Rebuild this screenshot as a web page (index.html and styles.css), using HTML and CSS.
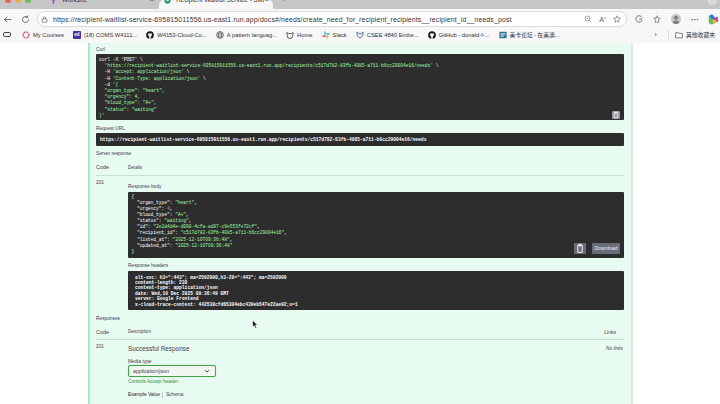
FILE: index.html
```html
<!DOCTYPE html>
<html>
<head>
    <title>Recipient Waitlist Service - Swagger UI</title>
    <meta charset="UTF-8">
    <link rel="stylesheet" href="styles.css">
</head>
<body>
<div class="tabstrip">
    <div class="lights"><i class="red"></i><i class="yellow"></i><i class="green"></i></div>
    <div class="tab">
        <svg class="fav" viewBox="0 0 10 10"><path d="M5 0.5 L9 3 L6 5.5 L6 9.5 L4 9.5 L4 5.5 L1 3 Z" fill="#9b3fc4"/></svg>
        <span class="tab-title">Workshe</span><span class="tab-x">×</span>
    </div>
    <div class="tab current">
        <svg class="fav" viewBox="0 0 10 10"><circle cx="5" cy="5" r="4.5" fill="#2f9e6e"/><path d="M3 5 L7 5" stroke="#fff"/></svg>
        <span class="tab-title">Recipient Waitlist Service - Swa</span><span class="tab-x">×</span>
    </div>
    <span class="tab-plus">+</span>
    <span class="tab-menu"></span>
</div>

<div class="addressrow">
    <svg class="nav-icon" viewBox="0 0 12 12"><path d="M11 6 H2 M5.5 2.5 L2 6 L5.5 9.5" fill="none" stroke="#444" stroke-width="1"/></svg>
    <svg class="nav-icon" viewBox="0 0 12 12"><path d="M10 6 A4 4 0 1 1 8.5 2.9 M8.8 0.8 V3.2 H6.4" fill="none" stroke="#444" stroke-width="1"/></svg>
    <div class="urlbar">
        <svg class="lock" viewBox="0 0 10 10"><rect x="1.5" y="4" width="7" height="5" rx="1" fill="none" stroke="#666"/><path d="M3.3 4 V2.8 A1.7 1.7 0 0 1 6.7 2.8 V4" fill="none" stroke="#666"/></svg>
        <span class="url">https://recipient-waitlist-service-695815011556.us-east1.run.app/docs#/needs/create_need_for_recipient_recipients__recipient_id__needs_post</span>
        <svg class="bar-icon" viewBox="0 0 10 10"><circle cx="4.3" cy="4.3" r="3" fill="none" stroke="#888"/><path d="M6.5 6.5 L9 9 M3 4.3 H5.6" stroke="#888"/></svg>
        <span class="bar-text">A<sup>ʌ</sup></span>
        <svg class="bar-icon" viewBox="0 0 10 10"><path d="M5 1 L6.2 3.8 L9.2 4.1 L6.9 6 L7.6 9 L5 7.4 L2.4 9 L3.1 6 L0.8 4.1 L3.8 3.8 Z" fill="none" stroke="#666" stroke-width="0.8"/></svg>
    </div>
    <div class="tools">
        <svg class="bar-icon" viewBox="0 0 10 10"><path d="M8.5 3 A4 4 0 1 0 8.8 6.2 M5 5 H9" fill="none" stroke="#555"/></svg>
        <svg class="bar-icon" viewBox="0 0 10 10"><path d="M5 1 L6 3.6 L9 4 L6.8 5.8 L7.4 9 H2.6 L3.2 5.8 L1 4 L4 3.6 Z" fill="none" stroke="#555" stroke-width="0.8"/></svg>
        <svg class="avatar" viewBox="0 0 10 10"><circle cx="5" cy="5" r="5" fill="#c4c4c4"/><circle cx="5" cy="3.8" r="2" fill="#7d7d7d"/><path d="M1.6 8.6 A3.6 3.2 0 0 1 8.4 8.6 A5 5 0 0 1 1.6 8.6 Z" fill="#7d7d7d"/></svg>
        <span class="dots">···</span>
        <svg class="copilot" viewBox="0 0 12 12"><path d="M2 3 A3 3 0 0 1 7 1.5 L10 6 L6 6 Z" fill="#2c7be5"/><path d="M10 3 A3 3 0 0 1 10 9 L7 10.5 L6 6 Z" fill="#e0447c"/><path d="M6 6 L7 10.5 A3 3 0 0 1 2 9 L2 3 Z" fill="#5fbf4c"/><circle cx="8.2" cy="8.2" r="2" fill="#f4b63c"/></svg>
    </div>
</div>

<div class="bookmarks">
    <span class="bm-first"></span>
    <span class="bm"><svg class="ico" viewBox="0 0 10 10"><circle cx="5" cy="5" r="3.6" fill="none" stroke="#c1536b" stroke-width="1.8" stroke-dasharray="1.6 0.7"/></svg>My Courses</span>
    <span class="bm"><i class="ed">ed</i>(18) COMS W4111...</span>
    <span class="bm"><svg class="ico" viewBox="0 0 10 10"><circle cx="5" cy="5" r="4.8" fill="#1b1b1b"/><path d="M3 2.6 L4 3.2 H6 L7 2.6 L7.3 5 A2.2 1.6 0 0 1 6 6.8 V9.6 H4 V6.8 A2.2 1.6 0 0 1 2.7 5 Z" fill="#f7f7f7"/></svg>W4153-Cloud-Co...</span>
    <span class="bm"><svg class="ico" viewBox="0 0 10 10"><g fill="none" stroke="#444" stroke-width="0.7"><circle cx="5" cy="5" r="4.3"/><ellipse cx="5" cy="5" rx="2" ry="4.3"/><path d="M0.7 5 H9.3 M1.4 2.8 H8.6 M1.4 7.2 H8.6"/></g></svg>A pattern languag...</span>
    <span class="bm"><svg class="ico" viewBox="0 0 10 10"><path d="M1 2 L3 3.2 H7 L9 2 L8.4 6 A3.4 3.4 0 0 1 1.6 6 Z" fill="none" stroke="#333" stroke-width="1"/></svg>Home</span>
    <span class="bm"><svg class="ico" viewBox="0 0 10 10" stroke-width="1.8" stroke-linecap="round"><path d="M3.6 1.2 V4.2" stroke="#36c5f0"/><path d="M5.8 3.6 H8.8" stroke="#2eb67d"/><path d="M6.4 5.8 V8.8" stroke="#ecb22e"/><path d="M1.2 6.4 H4.2" stroke="#e01e5a"/></svg>Slack</span>
    <span class="bm"><svg class="ico" viewBox="0 0 10 10"><path d="M1 1.5 L3 3 H7 L9 1.5 L8.4 6 L5 9 L1.6 6 Z" fill="none" stroke="#3d5fa8" stroke-width="1.1"/></svg>CSEE 4840 Embe...</span>
    <span class="bm"><svg class="ico" viewBox="0 0 10 10"><circle cx="5" cy="5" r="4.8" fill="#1b1b1b"/><path d="M3 2.6 L4 3.2 H6 L7 2.6 L7.3 5 A2.2 1.6 0 0 1 6 6.8 V9.6 H4 V6.8 A2.2 1.6 0 0 1 2.7 5 Z" fill="#f7f7f7"/></svg>GitHub - donald-f-...</span>
    <span class="bm"><svg class="ico" viewBox="0 0 10 10"><rect x="0.5" y="1" width="9" height="8" fill="#2a6f8f"/><rect x="2" y="3" width="6" height="1.5" fill="#e8f2f6"/><rect x="2" y="5.5" width="4" height="1.5" fill="#e8f2f6"/></svg><span class="cjk">美卡论坛 - 在美澳...</span></span>
    <span class="bm-more">›</span>
    <span class="bm other"><svg class="ico" viewBox="0 0 10 10"><path d="M0.8 2 H4 L5 3 H9.2 V8.6 H0.8 Z" fill="none" stroke="#444" stroke-width="0.8"/></svg><span class="cjk">其他收藏夹</span></span>
</div>

<div class="page">
    <div class="panel">
        <div class="label">Curl</div>
        <div class="code curl">
<pre>curl -X 'POST' \
  <em>'https://recipient-waitlist-service-695815011556.us-east1.run.app/recipients/c517d782-83fb-4085-a711-b6cc29004e16/needs'</em> \
  -H <em>'accept: application/json'</em> \
  -H <em>'Content-Type: application/json'</em> \
  -d <em>'{
  "organ_type": "heart",
  "urgency": 4,
  "blood_type": "A+",
  "status": "waiting"
}'</em></pre>
            <span class="copy"><svg viewBox="0 0 10 10"><path d="M3 2 H7 V8.5 H3 Z M4 1.2 H6 V2.6 H4 Z" fill="none" stroke="#f2f2f2" stroke-width="0.9"/></svg></span>
        </div>

        <div class="label">Request URL</div>
        <div class="code url-block"><pre>https://recipient-waitlist-service-695815011556.us-east1.run.app/recipients/c517d782-83fb-4085-a711-b6cc29004e16/needs</pre></div>

        <div class="label server">Server response</div>
        <div class="table-head"><span class="col-code">Code</span><span class="col-small">Details</span></div>
        <div class="table-row">
            <span class="col-code status">201</span>
            <div class="details">
                <div class="label sub">Response body</div>
                <div class="code body-block">
<pre>{
  "organ_type": <em>"heart"</em>,
  "urgency": <b>4</b>,
  "blood_type": <em>"A+"</em>,
  "status": <em>"waiting"</em>,
  "id": <em>"2e2d4d4e-d990-4cfa-ad97-c9e553fe72cf"</em>,
  "recipient_id": <em>"c517d782-83fb-4085-a711-b6cc29004e16"</em>,
  "listed_at": <em>"2025-12-10T09:36:48"</em>,
  "updated_at": <em>"2025-12-10T09:36:48"</em>
}</pre>
                    <div class="block-actions">
                        <span class="copy"><svg viewBox="0 0 10 10"><path d="M3 2 H7 V8.5 H3 Z M4 1.2 H6 V2.6 H4 Z" fill="none" stroke="#f2f2f2" stroke-width="0.9"/></svg></span>
                        <span class="download">Download</span>
                    </div>
                </div>
                <div class="label sub headers-label">Response headers</div>
                <div class="code headers-block">
<pre>alt-svc: h3=":443"; ma=2592000,h3-29=":443"; ma=2592000
content-length: 230
content-type: application/json
date: Wed,10 Dec 2025 09:36:49 GMT
server: Google Frontend
x-cloud-trace-context: 442538cfd65304ebc439eb547e22ae92;o=1</pre>
                </div>
            </div>
        </div>

        <div class="label responses">Responses</div>
        <div class="table-head wide"><span class="col-code">Code</span><span class="col-small">Description</span><span class="col-links">Links</span></div>
        <div class="table-row resp">
            <span class="col-code status">201</span>
            <div class="details">
                <div class="resp-title"><span>Successful Response</span><span class="no-links">No links</span></div>
                <div class="label sub media">Media type</div>
                <div class="select"><span>application/json</span><svg viewBox="0 0 8 8"><path d="M1.5 3 L4 5.5 L6.5 3" fill="none" stroke="#222" stroke-width="1.2"/></svg></div>
                <div class="controls">Controls Accept header.</div>
                <div class="example"><b>Example Value</b><span>Schema</span></div>
            </div>
        </div>
    </div>
    <div class="scroll-edge"></div>
    <svg class="cursor" viewBox="0 0 8 12"><path d="M1 0.5 V9 L3 7.3 L4.4 10.5 L5.8 9.9 L4.4 6.8 L7 6.6 Z" fill="#111" stroke="#fff" stroke-width="0.5"/></svg>
</div>
</body>
</html>
```

FILE: styles.css
```css
* {
    box-sizing: border-box;
}
html, body {
    margin: 0;
    height: 404px;
    overflow: hidden;
}
body {
    font-family: "Liberation Sans", "Noto Sans CJK SC", sans-serif;
    background-color: #fff;
    color: #3b4151;
}
pre {
    margin: 0;
    font-family: "Liberation Mono", monospace;
}

.tabstrip {
    height: 9px;
    background-color: #c6c6c6;
    display: flex;
    overflow: hidden;
    position: relative;
}
.lights {
    width: 43px;
    display: flex;
    gap: 4px;
    padding-left: 4.5px;
    flex-shrink: 0;
}
.lights i {
    width: 6px;
    height: 6px;
    border-radius: 50%;
    margin-top: -3px;
}
.lights .red { background-color: #ec5f57; }
.lights .yellow { background-color: #e9b13f; }
.lights .green { background-color: #5fc454; }
.tab {
    width: 112px;
    height: 9px;
    display: flex;
    align-items: flex-start;
    font-size: 6.4px;
    line-height: 8px;
    padding-left: 7px;
    color: #333;
    flex-shrink: 0;
}
.tab .fav {
    width: 7px;
    height: 7px;
    margin-right: 5px;
    margin-top: -3px;
    flex-shrink: 0;
}
.tab-title {
    margin-top: -4px;
    flex: 1;
    white-space: nowrap;
    overflow: hidden;
}
.tab-x {
    font-size: 8px;
    margin-top: -4px;
    margin-right: 1px;
    color: #555;
}
.tab.current {
    width: 114px;
    margin-left: 4px;
    background-color: #f7f7f7;
    border-radius: 5px 5px 0 0;
    padding-left: 5px;
}
.tab.current .tab-x {
    margin-right: 4px;
}
.tab-plus {
    margin-left: 9px;
    font-size: 8px;
    line-height: 8px;
    margin-top: -4px;
    color: #555;
}
.tab-menu {
    position: absolute;
    right: 3px;
    top: 0;
    width: 9px;
    height: 5px;
    background-color: #dadada;
    border-radius: 0 0 4px 4px;
}

.addressrow {
    height: 20px;
    background-color: #f7f7f7;
    display: flex;
    align-items: center;
    padding-left: 3px;
}
.nav-icon {
    width: 9px;
    height: 9px;
    margin-right: 9px;
    flex-shrink: 0;
}
.urlbar {
    flex: 0 0 590px;
    margin-left: -2px;
    height: 16px;
    border: 1px solid #dcdcdc;
    border-radius: 8px;
    background-color: #fff;
    display: flex;
    align-items: center;
    padding: 0 5px 0 3px;
    gap: 7px;
}
.lock {
    width: 7px;
    height: 7px;
    flex-shrink: 0;
}
.url {
    font-size: 6.9px;
    line-height: 11px;
    color: #333;
    white-space: nowrap;
    overflow: hidden;
    flex: 1;
    min-width: 0;
    margin-left: -2px;
    letter-spacing: 0.15px;
}
.bar-icon {
    width: 8px;
    height: 8px;
    flex-shrink: 0;
}
.bar-text {
    font-size: 7px;
    color: #666;
    line-height: 8px;
}
.bar-text sup {
    font-size: 4px;
}
.tools {
    display: flex;
    align-items: center;
    margin-left: 8px;
    gap: 10px;
}
.avatar {
    width: 10px;
    height: 10px;
}
.dots {
    font-size: 8px;
    font-weight: bold;
    color: #444;
}
.copilot {
    width: 11px;
    height: 11px;
    margin-left: -2px;
}

.bookmarks {
    height: 14px;
    padding: 0 0 3px 3px;
    background-color: #f7f7f7;
    display: flex;
    align-items: center;
    font-size: 5.8px;
    color: #333;
    white-space: nowrap;
}
.bm-first {
    width: 8px;
    height: 5px;
    border: 1px solid #444;
    border-radius: 2px;
    margin-right: 11px;
}
.bm {
    display: flex;
    align-items: center;
    gap: 3px;
    margin-right: 9px;
}
.cjk {
    font-family: "Noto Sans CJK SC", sans-serif;
}
.ico {
    width: 8px;
    height: 8px;
    flex-shrink: 0;
}
.ed {
    display: block;
    width: 8px;
    height: 8px;
    background-color: #4b2f91;
    color: #fff;
    border-radius: 1px;
    font-size: 4.5px;
    font-style: normal;
    font-weight: bold;
    line-height: 8px;
    text-align: center;
    flex-shrink: 0;
}
.bm-more {
    margin-left: auto;
    margin-right: 11px;
    font-size: 8px;
    line-height: 8px;
    color: #666;
}
.bm.other {
    margin-right: 5px;
    padding-left: 6px;
    border-left: 1px solid #ddd;
}

.page {
    position: relative;
    display: flex;
    height: 361px;
    padding-left: 88px;
    background-color: #fff;
}
.panel {
    width: 543px;
    height: 361px;
    overflow: hidden;
    background-color: #e8fbf0;
    border-left: 2px solid #a5ecc9;
    padding: 3px 7px 0 6px;
    font-size: 4.8px;
}
.scroll-edge {
    width: 2px;
    height: 361px;
    background-color: #e6e8e6;
}
.label {
    color: #3b4151;
    font-size: 4.8px;
    line-height: 6px;
    padding-top: 1px;
    margin-bottom: 1px;
}
.label.sub {
    margin-top: 7px;
    margin-bottom: 2px;
}
.code {
    background-color: #2d2d2d;
    border-radius: 1px;
    color: #fff;
    font-size: 4.57px;
    line-height: 6.2px;
    position: relative;
    overflow: hidden;
}
.code pre {
    font-weight: bold;
}
.code em {
    font-style: normal;
    color: #a2fca2;
}
.code b {
    color: #d36363;
}
.curl {
    height: 66px;
    padding: 3px;
    margin-bottom: 5px;
}
.curl pre {
    font-weight: normal;
}
.url-block {
    height: 13px;
    padding: 4px;
    font-size: 4.61px;
    line-height: 5px;
}
.label.server {
    margin-top: 4px;
    margin-bottom: -1px;
}
.table-head {
    display: flex;
    height: 20px;
    align-items: center;
    border-bottom: 1px solid #c9dfd2;
    padding-top: 3px;
}
.col-code {
    width: 32px;
    flex-shrink: 0;
    font-size: 5.4px;
}
.col-small {
    font-size: 4.6px;
}
.col-links {
    margin-left: auto;
    margin-right: 8px;
    font-size: 5px;
}
.table-row {
    display: flex;
}
.status {
    padding-top: 4px;
    font-size: 4.8px;
    line-height: 6px;
}
.details {
    flex: 1;
    min-width: 0;
}
.body-block {
    height: 66px;
    padding: 1.6px 3.5px;
    font-size: 4.55px;
    line-height: 6.14px;
}
.body-block pre {
    font-weight: normal;
}
.label.headers-label {
    margin-top: 4px;
}
.block-actions {
    position: absolute;
    right: 4px;
    bottom: 4px;
    display: flex;
    align-items: center;
    gap: 6px;
}
.copy {
    display: block;
    width: 8px;
    height: 8px;
    background-color: #9a9ca5;
    border-radius: 1px;
}
.copy svg {
    display: block;
    width: 100%;
    height: 100%;
}
.curl .copy {
    position: absolute;
    right: 4px;
    bottom: 1px;
}
.block-actions .copy {
    width: 12px;
    height: 11px;
    background-color: #6b6c7a;
}
.download {
    display: block;
    width: 28px;
    height: 11px;
    line-height: 11px;
    text-align: center;
    background-color: #6b6c7a;
    border-radius: 1px;
    color: #eee;
    font-family: "Liberation Sans", sans-serif;
    font-size: 5.2px;
}
.headers-block {
    height: 39px;
    padding: 3.5px 7px;
    font-size: 4.6px;
    line-height: 5.47px;
}
.label.responses {
    margin-top: 5px;
    margin-bottom: -1px;
}
.wide {
    height: 19px;
}
.resp-title {
    display: flex;
    justify-content: space-between;
    align-items: center;
    font-size: 6.4px;
    line-height: 9px;
    padding-top: 3.5px;
    padding-right: 1px;
}
.no-links {
    font-size: 4.8px;
    font-style: italic;
}
.label.media {
    margin-top: 5.5px;
    margin-bottom: 0;
}
.select {
    width: 88px;
    height: 12px;
    border: 1px solid #41a34a;
    border-radius: 2px;
    background-color: #f3f7f1;
    box-shadow: 0 0 1px rgba(0, 0, 0, 0.25);
    display: flex;
    align-items: center;
    justify-content: space-between;
    padding: 0 5px 0 4px;
    font-size: 5.2px;
}
.select svg {
    width: 6px;
    height: 6px;
}
.controls {
    color: #2f8f3c;
    font-size: 4.8px;
    line-height: 6px;
    margin-top: 2px;
}
.example {
    display: flex;
    margin-top: 7px;
    font-size: 4.8px;
    line-height: 6px;
}
.example b {
    font-weight: normal;
    color: #222;
    padding-right: 2px;
    border-right: 1px solid #c9c9c9;
    margin-right: 3px;
}
.cursor {
    position: absolute;
    left: 252px;
    top: 277px;
    width: 6px;
    height: 9px;
}
```
